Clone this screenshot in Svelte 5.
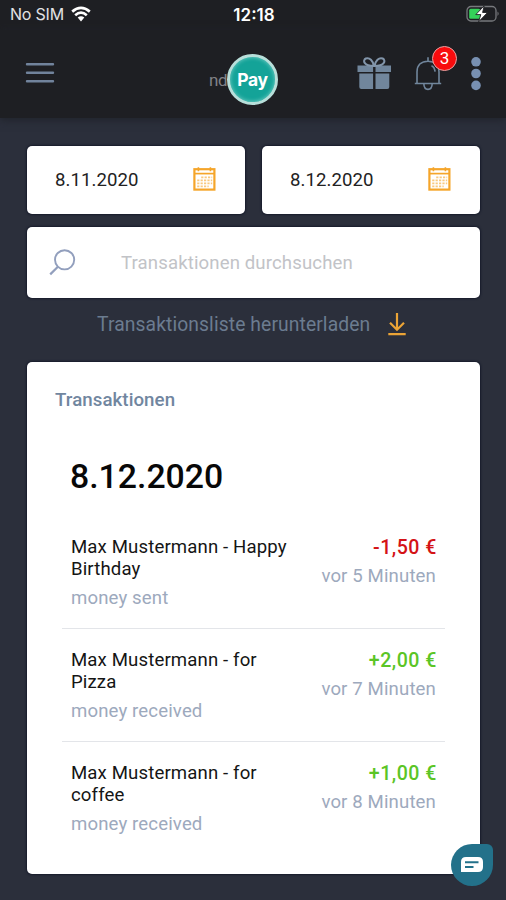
<script>
  const dates = ['8.11.2020', '8.12.2020'];
  const transactions = [
    { title: ['Max Mustermann - Happy', 'Birthday'], note: 'money sent', amount: '-1,50 €', time: 'vor 5 Minuten', sent: true },
    { title: ['Max Mustermann - for', 'Pizza'], note: 'money received', amount: '+2,00 €', time: 'vor 7 Minuten', sent: false },
    { title: ['Max Mustermann - for', 'coffee'], note: 'money received', amount: '+1,00 €', time: 'vor 8 Minuten', sent: false }
  ];
</script>

<div class="app">
  <div class="status">
    <div class="carrier">
      <span>No SIM</span>
      <svg width="20" height="16" viewBox="0 0 20 16" fill="none" stroke="#fff" stroke-width="2.7">
        <path d="M1.2 5.6Q10 -1.8 18.8 5.6M4.2 9.2Q10 4.2 15.8 9.2" />
        <path d="M6.7 11.6Q10 8.8 13.3 11.6L10 15.4Z" fill="#fff" stroke="none" />
      </svg>
    </div>
    <div class="clock">12:18</div>
    <svg class="battery" width="34" height="18" viewBox="0 0 34 18">
      <rect x="1" y="1.5" width="29" height="14.5" rx="4" fill="none" stroke="#77797d" stroke-width="1.3" />
      <rect x="3.2" y="3.7" width="11" height="10" rx="1.5" fill="#35d05a" />
      <path d="M31.5 6.5q2.3 2.2 0 4.5z" fill="#77797d" />
      <path d="M18.2 .8 9.8 9.6h5l-2.2 7.2 9-9.3h-5z" fill="#fff" stroke="#1e1f23" stroke-width=".9" />
    </svg>
  </div>

  <header>
    <svg class="menu" width="30" height="22" viewBox="0 0 30 22" stroke="#71839c" stroke-width="2.4" stroke-linecap="round">
      <path d="M2 2.2h26M2 10.8h26M2 19.3h26" />
    </svg>
    <div class="logo"><span>nd</span><b>Pay</b></div>
    <div class="actions">
      <svg width="35" height="34" viewBox="0 0 35 34" fill="#71869c">
        <path d="M.5 8.5h15.6v6.4H.5zM18.5 8.5H34v6.4H18.5zM2.3 16.6h13.8v15.4H4.3q-2 0-2-2zM18.5 16.6h13.8V30q0 2-2 2H18.5z" />
        <path d="M16.8 9C6.5 9 5.5 3.2 8.8 1.5 12.5 0 16.2 4 16.8 9ZM17.6 9C28 9 29 3.2 25.7 1.5 22 0 18.2 4 17.6 9Z" fill="none" stroke="#8295aa" stroke-width="2" />
      </svg>
      <div class="bell">
        <svg width="28" height="36" viewBox="0 0 28 36" fill="none" stroke="#71869c" stroke-width="1.6">
          <path d="M14 .2v4M.8 26.5h26.4M3 26.3V15C3 7.8 7.5 4.2 14 4.2S25 7.8 25 15v11.3M9.8 26.5Q10 32.4 14 32.4T18.2 26.5M17.5 8.7q3 1.2 3.6 6" />
        </svg>
        <span class="badge">3</span>
      </div>
      <svg width="12" height="36" viewBox="0 0 12 36" fill="#7890b2">
        <circle cx="6" cy="4.8" r="4.8" /><circle cx="6" cy="16.5" r="4.8" /><circle cx="6" cy="28.4" r="4.8" />
      </svg>
    </div>
  </header>

  <main>
    <div class="dates">
      {#each dates as date}
        <div class="field">
          <span>{date}</span>
          <svg width="23" height="24" viewBox="0 0 23 24" fill="none" stroke="#f5a52a">
            <rect x="1.4" y="2.2" width="20" height="20.4" stroke-width="2.2" />
            <path d="M1 6.6h21" stroke-width="1.7" />
            <path d="M5.4 .3v4M17.4 .3v4" stroke-width="1.6" />
            <path d="M8.2 10.4h11M4.2 13.4h15M4.2 16.4h15M4.2 19.4h11.5" stroke-width="1.7" stroke-dasharray="2.2 1.2" opacity=".6" />
          </svg>
        </div>
      {/each}
    </div>
    <div class="search">
      <svg width="27" height="27" viewBox="0 0 27 27" fill="none" stroke="#929fbd" stroke-width="1.9">
        <circle cx="15.6" cy="10.8" r="9.6" /><path d="M8.9 17.7 1.2 25.4" stroke-width="2.2" />
      </svg>
      <span>Transaktionen durchsuchen</span>
    </div>
    <div class="download">
      <span>Transaktionsliste herunterladen</span>
      <svg width="18" height="24" viewBox="0 0 18 24" fill="none" stroke="#eba436" stroke-width="2.2">
        <path d="M9 1v16.5M2 10.8l7 7 7-7M.3 22.2h17.4" />
      </svg>
    </div>

    <section>
      <h2>Transaktionen</h2>
      <h1>8.12.2020</h1>
      {#each transactions as t}
        <article>
          <div class="info">
            <div class="title">{t.title[0]}<br />{t.title[1]}</div>
            <div class="note">{t.note}</div>
          </div>
          <div class="value">
            <div class="amount" class:sent={t.sent}>{t.amount}</div>
            <div class="time">{t.time}</div>
          </div>
        </article>
      {/each}
    </section>
  </main>

  <div class="chat">
    <svg width="24" height="18" viewBox="0 0 24 18">
      <path d="M6 1h12q5 0 5 5v5q0 5-5 5H1V6q0-5 5-5Z" fill="#fff" />
      <path d="M5 6.3h13.5M5 11h8.5" stroke="#23718a" stroke-width="2.1" />
    </svg>
  </div>
</div>

<style>
  :global(body) { margin: 0; }
  .app {
    position: relative;
    width: 506px;
    height: 900px;
    overflow: hidden;
    background: #2b2f3b;
    font-family: Roboto, sans-serif;
    font-size: 18.6px;
    letter-spacing: .06px;
    display: flex;
    flex-direction: column;
  }
  svg { display: block; flex: none; }
  .status {
    height: 30px;
    box-sizing: border-box;
    padding: 0 6px 2px 10px;
    background: #1e1f23;
    color: #fff;
    display: grid;
    grid-template-columns: 1fr auto 1fr;
    align-items: center;
    font-family: Inter, sans-serif;
    font-size: 16px;
    letter-spacing: 0;
  }
  .carrier { display: flex; align-items: center; gap: 7px; color: #e2e2e4; letter-spacing: -.2px; }
  .clock { font-weight: 600; font-size: 17px; margin: 2px 2px 0 0; }
  .battery { justify-self: end; }
  header {
    height: 88px;
    box-sizing: border-box;
    padding: 0 24px 0 25px;
    background: #1e1f23;
    display: grid;
    grid-template-columns: 184px 1fr auto;
    align-items: start;
    box-shadow: 0 2px 8px #20232b;
  }
  .menu { margin-top: 32px; }
  .logo { display: flex; align-items: center; margin-top: 24px; }
  .logo span { width: 18px; color: #818286; font-size: 17px; letter-spacing: -.4px; }
  .logo b {
    width: 45px;
    height: 45px;
    border: 3px solid #b8dfda;
    border-radius: 50%;
    background: #14a398;
    box-shadow: inset 0 0 4px #7bd1c9;
    color: #fff;
    font: 700 17.5px/45px Inter, sans-serif;
    letter-spacing: -.4px;
    text-align: center;
  }
  .actions { display: flex; align-items: flex-start; margin-top: 27px; }
  .bell { position: relative; margin-left: 22px; margin-right: 28px; }
  .badge {
    position: absolute;
    left: 18px;
    top: -11px;
    width: 23px;
    height: 23px;
    border: 1px solid #e7a3a3;
    border-radius: 50%;
    background: #f80b0d;
    color: #fff;
    font-size: 17px;
    line-height: 23px;
    letter-spacing: 0;
    text-align: center;
  }
  main { padding: 28px 26px 0 27px; }
  .dates { display: grid; grid-template-columns: 1fr 1fr; gap: 17px; }
  .field, .search, section {
    background: #fff;
    border-radius: 5px;
    box-shadow: 0 0 2px 1px #171b2b;
  }
  .field {
    height: 68px;
    box-sizing: border-box;
    padding: 0 29px 2px 28px;
    display: flex;
    align-items: center;
    justify-content: space-between;
    color: #222;
  }
  .field span { padding-top: 2px; }
  .search {
    height: 71px;
    margin-top: 13px;
    box-sizing: border-box;
    padding: 0 22px;
    display: flex;
    align-items: center;
    gap: 45px;
    color: #c2c3c7;
  }
  .search span { letter-spacing: .12px; }
  .download {
    height: 26px;
    margin-top: 13px;
    padding-left: 70px;
    display: flex;
    align-items: center;
    gap: 18px;
    color: #6b7c90;
    font-size: 19.3px;
    letter-spacing: .1px;
  }
  section {
    height: 512px;
    margin-top: 25px;
    box-sizing: border-box;
    padding: 27px 35px 0;
  }
  h2 {
    margin: 0 0 0 -7px;
    font-size: 18.7px;
    line-height: 22px;
    font-weight: 500;
    color: #71869f;
  }
  h1 {
    margin: 46px 0 0 8px;
    font-size: 33.8px;
    line-height: 40px;
    font-weight: 500;
    letter-spacing: 0;
    color: #080808;
  }
  article {
    height: 113px;
    box-sizing: border-box;
    padding: 20px 8px 0 9px;
    border-bottom: 1px solid #e3e5e9;
    display: flex;
    justify-content: space-between;
  }
  h1 + article { margin-top: 19px; }
  article:last-child { border-bottom: 0; }
  .title { line-height: 22px; color: #151515; letter-spacing: .13px; }
  .note { margin-top: 7px; line-height: 22px; color: #9da9bd; letter-spacing: .13px; }
  .value { text-align: right; }
  .amount { padding-top: 1px; line-height: 22px; font-size: 19.6px; font-weight: 500; letter-spacing: .5px; color: #5bc526; }
  .amount.sent { color: #d41216; }
  .time { margin: 6px 1px 0 0; line-height: 22px; color: #9da9bd; letter-spacing: .13px; }
  .chat {
    position: absolute;
    left: 451px;
    top: 844px;
    width: 42px;
    height: 42px;
    border-radius: 50% 6px 50% 50%;
    background: #23718a;
    display: grid;
    place-items: center;
  }
</style>
